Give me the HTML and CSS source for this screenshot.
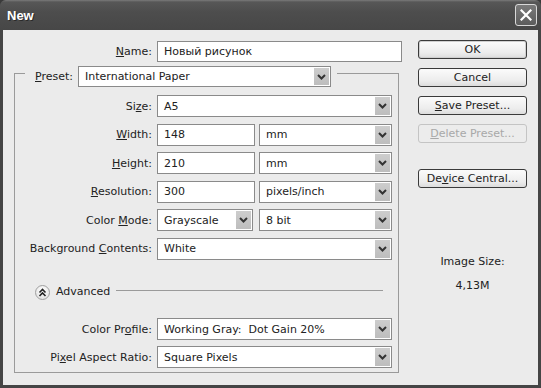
FILE: index.html
```html
<!DOCTYPE html>
<html>
<head>
<meta charset="utf-8">
<link rel="stylesheet" href="styles.css">
</head>
<body>
<div class="window">
  <div class="titlebar">
    <span class="title">New</span>
    <span class="close">
      <svg width="12" height="12" viewBox="0 0 12 12"><path d="M1.5 1.5 L10.5 10.5 M10.5 1.5 L1.5 10.5" stroke="#fff" stroke-width="2.2" stroke-linecap="square"/></svg>
    </span>
  </div>
  <div class="client">
    <div class="main">
      <div class="row">
        <span class="lbl"><u>N</u>ame:</span>
        <div class="field name-field">Новый рисунок</div>
      </div>
      <div class="group">
        <div class="group-head">
          <span class="head-lbl"><u>P</u>reset:</span>
          <div class="select preset-select"><span class="val">International Paper</span><span class="arrow"><svg width="9" height="6" viewBox="0 0 9 6"><path d="M1 1 L4.5 4.5 L8 1" fill="none" stroke="#333" stroke-width="2"/></svg></span></div>
        </div>
        <div class="rows">
          <div class="row">
            <span class="lbl glbl">Si<u>z</u>e:</span>
            <div class="select wide"><span class="val">A5</span><span class="arrow"><svg width="9" height="6" viewBox="0 0 9 6"><path d="M1 1 L4.5 4.5 L8 1" fill="none" stroke="#333" stroke-width="2"/></svg></span></div>
          </div>
          <div class="row">
            <span class="lbl glbl"><u>W</u>idth:</span>
            <div class="field num">148</div>
            <div class="select unit"><span class="val">mm</span><span class="arrow"><svg width="9" height="6" viewBox="0 0 9 6"><path d="M1 1 L4.5 4.5 L8 1" fill="none" stroke="#333" stroke-width="2"/></svg></span></div>
          </div>
          <div class="row">
            <span class="lbl glbl"><u>H</u>eight:</span>
            <div class="field num">210</div>
            <div class="select unit"><span class="val">mm</span><span class="arrow"><svg width="9" height="6" viewBox="0 0 9 6"><path d="M1 1 L4.5 4.5 L8 1" fill="none" stroke="#333" stroke-width="2"/></svg></span></div>
          </div>
          <div class="row">
            <span class="lbl glbl"><u>R</u>esolution:</span>
            <div class="field num">300</div>
            <div class="select unit"><span class="val">pixels/inch</span><span class="arrow"><svg width="9" height="6" viewBox="0 0 9 6"><path d="M1 1 L4.5 4.5 L8 1" fill="none" stroke="#333" stroke-width="2"/></svg></span></div>
          </div>
          <div class="row">
            <span class="lbl glbl">Color <u>M</u>ode:</span>
            <div class="select mode"><span class="val">Grayscale</span><span class="arrow"><svg width="9" height="6" viewBox="0 0 9 6"><path d="M1 1 L4.5 4.5 L8 1" fill="none" stroke="#333" stroke-width="2"/></svg></span></div>
            <div class="select unit"><span class="val">8 bit</span><span class="arrow"><svg width="9" height="6" viewBox="0 0 9 6"><path d="M1 1 L4.5 4.5 L8 1" fill="none" stroke="#333" stroke-width="2"/></svg></span></div>
          </div>
          <div class="row">
            <span class="lbl glbl">Background <u>C</u>ontents:</span>
            <div class="select wide"><span class="val">White</span><span class="arrow"><svg width="9" height="6" viewBox="0 0 9 6"><path d="M1 1 L4.5 4.5 L8 1" fill="none" stroke="#333" stroke-width="2"/></svg></span></div>
          </div>
        </div>
        <div class="advanced">
          <span class="adv-btn"><svg width="9" height="9" viewBox="0 0 9 9"><path d="M1.5 4.5 L4.5 1.5 L7.5 4.5 M1.5 8 L4.5 5 L7.5 8" fill="none" stroke="#222" stroke-width="1.6"/></svg></span>
          <span class="adv-lbl">Advanced</span>
          <span class="adv-line"></span>
        </div>
        <div class="rows adv-rows">
          <div class="row">
            <span class="lbl glbl">Color Pr<u>o</u>file:</span>
            <div class="select wide"><span class="val">Working Gray:&nbsp; Dot Gain 20%</span><span class="arrow"><svg width="9" height="6" viewBox="0 0 9 6"><path d="M1 1 L4.5 4.5 L8 1" fill="none" stroke="#333" stroke-width="2"/></svg></span></div>
          </div>
          <div class="row">
            <span class="lbl glbl">Pi<u>x</u>el Aspect Ratio:</span>
            <div class="select wide"><span class="val">Square Pixels</span><span class="arrow"><svg width="9" height="6" viewBox="0 0 9 6"><path d="M1 1 L4.5 4.5 L8 1" fill="none" stroke="#333" stroke-width="2"/></svg></span></div>
          </div>
        </div>
      </div>
    </div>
    <div class="side">
      <div class="btn default">OK</div>
      <div class="btn">Cancel</div>
      <div class="btn"><u>S</u>ave Preset...</div>
      <div class="btn disabled"><u>D</u>elete Preset...</div>
      <div class="btn device">De<u>v</u>ice Central...</div>
      <div class="info">Image Size:</div>
      <div class="info info-val">4,13M</div>
    </div>
  </div>
</div>
</body>
</html>
```
FILE: styles.css
```css
html, body {
  margin: 0;
  padding: 0;
  background: #3a3a3a;
}
.window {
  width: 541px;
  height: 388px;
  box-sizing: border-box;
  background: #454545;
  padding: 0 3px 3px 3px;
  display: flex;
  flex-direction: column;
  font-family: "DejaVu Sans", sans-serif;
  font-size: 11px;
  color: #222;
  border-radius: 6px 6px 0 0;
  overflow: hidden;
}
.titlebar {
  height: 30px;
  margin: 0 -3px;
  padding: 0 4px 0 7px;
  display: flex;
  align-items: center;
  justify-content: space-between;
  background: linear-gradient(#7a7a7a 0, #575757 2px, #4d4d4d 40%, #474747 100%);
}
.title {
  font-family: "Liberation Sans", Arial, sans-serif;
  font-weight: bold;
  font-size: 13px;
  color: #fff;
  text-shadow: 1px 1px 0 #2a2a2a;
  margin-top: 1px;
}
.close {
  width: 20px;
  height: 20px;
  border: 1px solid #d8d8d8;
  border-radius: 3px;
  background: linear-gradient(#7a7a7a, #5c5c5c);
  display: flex;
  align-items: center;
  justify-content: center;
}
.client {
  flex: 1;
  background: #ebebeb;
  display: flex;
  padding: 10px 0 0 11px;
}
.main {
  width: 388px;
  display: flex;
  flex-direction: column;
}
.row {
  display: flex;
  align-items: center;
  height: 22px;
}
.lbl {
  width: 138px;
  text-align: right;
  margin-right: 5px;
  white-space: nowrap;
}
.glbl {
  width: 137px;
}
.field {
  height: 22px;
  box-sizing: border-box;
  border: 1px solid #8a8a8a;
  background: #fff;
  padding: 0 6px;
  display: flex;
  align-items: center;
  white-space: nowrap;
}
.name-field {
  width: 245px;
  height: 21px;
}
.num {
  width: 98px;
  margin-right: 4px;
}
.select {
  height: 22px;
  box-sizing: border-box;
  border: 1px solid #8a8a8a;
  background: #fff;
  display: flex;
  align-items: stretch;
  padding: 1px;
}
.select .val {
  flex: 1;
  padding-left: 5px;
  display: flex;
  align-items: center;
  white-space: nowrap;
  overflow: hidden;
}
.select .arrow {
  width: 15px;
  background: linear-gradient(#cdcdcd, #bdbdbd);
  display: flex;
  align-items: center;
  justify-content: center;
}
.wide { width: 235px; }
.unit { width: 133px; }
.mode { width: 96px; margin-right: 6px; }
.preset-select { width: 253px; height: 21px; }
.group {
  margin-top: 11px;
  width: 385px;
  height: 300px;
  box-sizing: border-box;
  border: 1px solid #9a9a9a;
  display: flex;
  flex-direction: column;
}
.group-head {
  align-self: flex-start;
  margin: -8px 0 0 10px;
  padding: 0 6px 0 10px;
  background: #ebebeb;
  display: flex;
  align-items: center;
}
.head-lbl {
  margin-right: 5px;
}
.rows {
  margin-top: 8px;
  display: flex;
  flex-direction: column;
  gap: 6.5px;
}
.advanced {
  margin: 25.5px 15px 0 20px;
  height: 15px;
  display: flex;
  align-items: center;
}
.adv-btn {
  width: 15px;
  height: 15px;
  box-sizing: border-box;
  border-radius: 50%;
  border: 1px solid #a0a0a0;
  background: radial-gradient(circle at 50% 35%, #ffffff, #dcdcdc);
  display: flex;
  align-items: center;
  justify-content: center;
}
.adv-lbl {
  margin-left: 6px;
  margin-top: -3px;
}
.adv-line {
  flex: 1;
  height: 1px;
  background: #9a9a9a;
  margin-left: 6px;
  margin-top: -4px;
}
.adv-rows {
  margin-top: 18px;
  gap: 6px;
}
.side {
  width: 109px;
  margin-left: 16px;
  display: flex;
  flex-direction: column;
}
.btn {
  height: 19px;
  box-sizing: border-box;
  border: 1px solid #3a3a3a;
  border-radius: 3px;
  background: linear-gradient(#fbfbfb, #ececec 70%, #dcdcdc);
  display: flex;
  align-items: center;
  justify-content: center;
  white-space: nowrap;
  margin-bottom: 9px;
}
.btn.default {
  box-shadow: inset 0 0 0 1px #cfcfcf;
}
.btn.disabled {
  color: #a8a8a8;
  border-color: #c4c4c4;
  background: #ececec;
  margin-bottom: 26px;
}
.btn.device {
  margin-bottom: 0;
}
.info {
  text-align: center;
  margin-top: 67px;
  height: 14px;
  line-height: 14px;
}
.info-val {
  margin-top: 10px;
}
```
